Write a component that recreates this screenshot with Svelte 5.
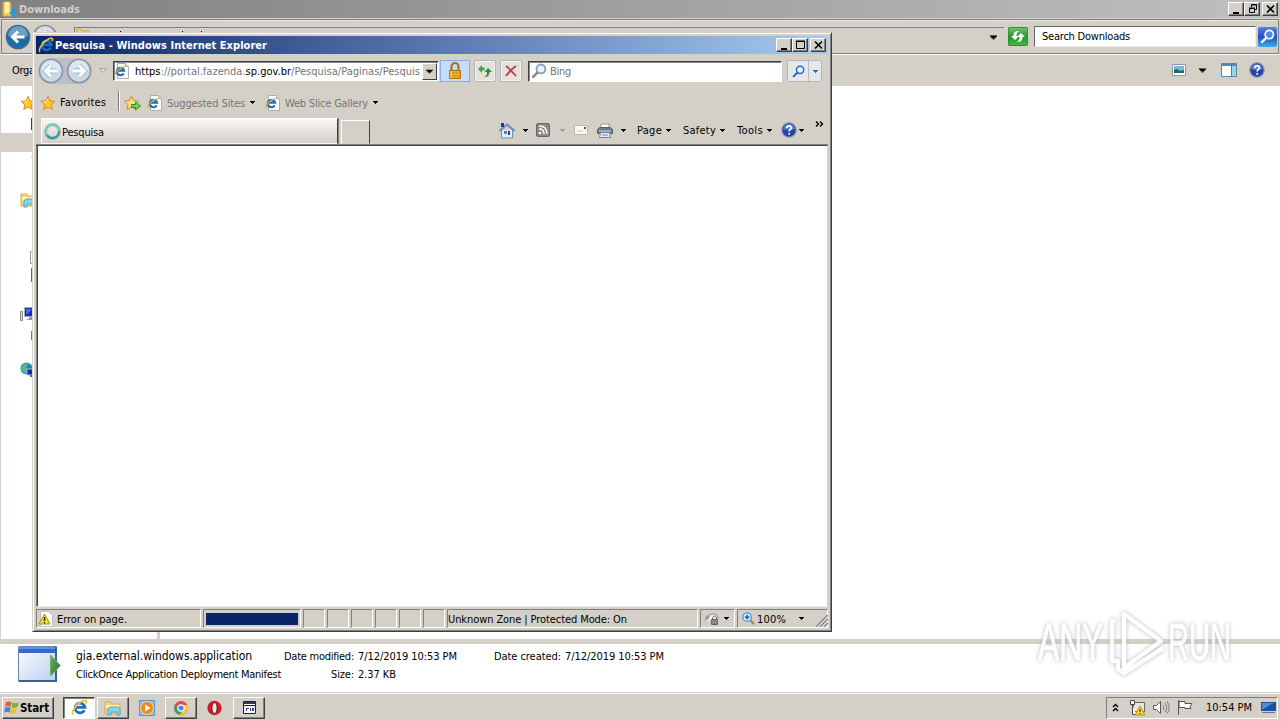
<!--
  Windows desktop: an Explorer window in the background, an Internet Explorer
  window over it and the taskbar along the bottom edge.
-->
<script lang="ts">
  const menus = [
    { name: 'Page', width: 25 },
    { name: 'Safety', width: 33 },
    { name: 'Tools', width: 26 },
  ];
  const emptyPanes = [0, 1, 2, 3, 4, 5];

  // Spreads the letters so a label takes exactly the given width.
  function fit(node: HTMLElement, width: number) {
    const chars = node.textContent?.length ?? 1;
    node.style.letterSpacing = '0';
    const natural = node.getBoundingClientRect().width;
    node.style.letterSpacing = `${(width - natural) / chars}px`;
  }
</script>

{#snippet arrow()}
  <svg class="arrow" width="5" height="3" viewBox="0 0 5 3"><path d="M0 0h5v1H4v1H3v1H2V2H1V1H0z" fill="currentColor" /></svg>
{/snippet}

{#snippet ie(size: number)}
  <svg width={size} height={size} viewBox="0 0 16 16">
    <path d="M12.6 10.6a4.600 4.600 0 1 1 .5-2.700H5" fill="none" stroke="#1a6fc4" stroke-width="2.6" />
    <path d="M4.300 6.500q1.200-2.700 4.700-2.600" fill="none" stroke="#8fdcfb" stroke-width="1.3" />
    <path d="M2 14.800C-.6 13 5.500 3.500 12.600 1.300c2.400-.5 2.200 1.300 1.300 2.900" fill="none" stroke="#f0be35" stroke-width="1.6" />
  </svg>
{/snippet}

{#snippet iePage()}
  <svg width="16" height="16" viewBox="0 0 16 16">
    <path d="M3.5.5h8l3 3v12h-11z" fill="#fff" stroke="#a7adb5" />
    <path d="M11.5.5v3h3" fill="#dce5ee" stroke="#a7adb5" />
    <path d="M9.7 10.4a3.7 3.7 0 1 1 .4-2.7H3" fill="none" stroke="#1b70bd" stroke-width="2.2" />
    <path d="M1 13C.2 10 5 4.500 11 3.6" fill="none" stroke="#dfae2c" stroke-width="1.2" />
  </svg>
{/snippet}

{#snippet star()}
  <svg width="16" height="16" viewBox="0 0 17 16">
    <path d="M8.5 1l2.1 4.7 5.2.5-3.9 3.5 1.1 5.2-4.5-2.7L4 14.9l1.1-5.2L1.2 6.2l5.2-.5z" fill="#ffc928" stroke="#d98616" />
    <path d="M8.4 3.5L7 6.8l-3.4.3" fill="none" stroke="#fff0a0" />
  </svg>
{/snippet}

{#snippet help()}
  <svg width="16" height="16" viewBox="0 0 16 16">
    <circle cx="8" cy="8" r="7.3" fill="#2446a6" stroke="#9aa0b0" stroke-width="1.2" />
    <path d="M2.4 7a5.7 5.7 0 0 1 11.2 0Q8 9 2.4 7" fill="#6286d4" />
    <path d="M5.8 6c0-3 4.7-2.8 4.6-.2C10.4 7.5 8.2 7.3 8.2 9.6M8.2 11v1.8" fill="none" stroke="#fff" stroke-width="1.7" />
  </svg>
{/snippet}

{#snippet lens(size: number, color: string, handle: string, glass: string)}
  <svg width={size} height={size} viewBox="0 0 14 14">
    <path d="M1.2 12.8L6 8" stroke={handle} stroke-width="2.2" />
    <circle cx="8.7" cy="5.2" r="3.9" fill={glass} stroke={color} stroke-width="1.6" />
  </svg>
{/snippet}

{#snippet folder()}
  <svg width="18" height="16" viewBox="0 0 18 16">
    <path d="M1 2h6l1 2h8v10H1z" fill="#f2d56b" stroke="#d3b255" />
    <path d="M2 5h13v3H2z" fill="#fff3b5" />
    <path d="M4 15V9l2-2h8l2 2v6h-3v-3H7v3z" fill="#8ad4ef" stroke="#4ba6cf" />
  </svg>
{/snippet}

{#snippet windowButtons(restore: boolean)}
  <div class="wbtns">
    <span class="wbtn"><svg width="12" height="10"><path d="M2 8h6v2H2z" /></svg></span>
    <span class="wbtn">
      {#if restore}
        <svg width="12" height="10"><path d="M4.5 3V.5h5v5H8M4 1h6M2.5 4.5h5v4h-5zM2 4h6" fill="none" stroke="#000" /></svg>
      {:else}
        <svg width="12" height="10"><path d="M1.5 1.5h8v7h-8zM1 1h9" fill="none" stroke="#000" /></svg>
      {/if}
    </span>
    <span class="wbtn close"><svg width="12" height="10"><path d="M2 1.500l7 7M9 1.500l-7 7" stroke="#000" stroke-width="1.6" /></svg></span>
  </div>
{/snippet}

{#snippet roundArrow(color: string, rim: string, flip: boolean)}
  <svg width="26" height="26" viewBox="0 0 26 26">
    <circle cx="13" cy="13" r="11.5" fill={color} stroke={rim} stroke-width="1.6" />
    <path d="M3 12a10 10 0 0 1 20 0q-10 3-20 0" fill="#fff" opacity=".35" />
    <path transform={flip ? 'translate(26 0) scale(-1 1)' : undefined} d="M19 13H8M13 7.500L7.500 13l5.500 5.500" fill="none" stroke={flip || rim === '#8795a6' ? '#a9bccb' : 'none'} stroke-width="5" />
    <path transform={flip ? 'translate(26 0) scale(-1 1)' : undefined} d="M19.500 13H8M13 7.500L7.500 13l5.500 5.500" fill="none" stroke="#fff" stroke-width="3" />
  </svg>
{/snippet}

<div class="desktop">
  <section class="explorer">
    <header class="title inactive">
      <svg width="16" height="16" viewBox="0 0 16 16">
        <path d="M1 1h7l1 2v12H1z" fill="#f0ce63" stroke="#d0a43d" />
        <path d="M3 1h4v11H3z" fill="#fff0ae" />
        <path d="M9 7h4v4h2l-4 5-4-5h2z" fill="#2998df" />
      </svg>
      <b use:fit={61}>Downloads</b>
      {@render windowButtons(true)}
    </header>

    <div class="nav">
      <div class="back">{@render roundArrow('#176eab', '#456987', false)}</div>
      <div class="forward">{@render roundArrow('#c8ced4', '#858b91', true)}</div>
      <div class="path">
        <svg width="130" height="20" viewBox="0 0 130 20">
          <path d="M2 2h4l1 2h7v14H2z" fill="#f5d66e" stroke="#cfa53e" />
          <path d="M45 4h1v2h-1zM107 4h1v2h-1zM126 4h1v2h-1z" fill="#000" />
        </svg>
        <i class="drop">{@render arrow()}</i>
      </div>
      <div class="go">
        <svg width="20" height="19" viewBox="0 0 20 19">
          <path d="M3 8l4-4 4 4H8.500c0 3 1 4 3 5-4 0-6-1-6-5z" fill="#fff" transform="matrix(1 0 0 -1 0 17)" />
          <path d="M17 10l-4-4-4 4h2.500c0 3-1 4-3 5 4 0 6-1 6-5z" fill="#fff" />
        </svg>
      </div>
      <div class="search"><span use:fit={88}>Search Downloads</span></div>
      <div class="find">{@render lens(15, '#fff', '#fff', '#4f8ae6')}</div>
    </div>

    <div class="tools">
      <span class="organize">Orga</span>
      <svg class="views" width="14" height="12" viewBox="0 0 14 12">
        <path d="M.5.5h13v11H.5z" fill="#fff" stroke="#8999a7" />
        <path d="M2 2h10v7H2z" fill="#72b7e6" /><path d="M2 6l3-1 3 2 4-1v3H2z" fill="#26685f" />
      </svg>
      <i class="viewdrop">{@render arrow()}</i>
      <svg class="preview" width="16" height="14" viewBox="0 0 16 14">
        <path d="M.5.5h15v13H.5z" fill="#fff" stroke="#5689a8" />
        <path d="M1 1h14v2H1z" fill="#5689a8" /><path d="M10 3h5v10h-5z" fill="#9fd2e5" />
        <path d="M10.500 1v12" stroke="#4a7f9b" />
      </svg>
      {@render help()}
    </div>

    <div class="files">
      <div class="tree">
        <div class="node fav">{@render star()}</div>
        <div class="node desk"><svg width="4" height="12"><path d="M1 0h3v12H1z" fill="#263c96" /></svg></div>
        <div class="node picked"></div>
        <div class="node recent"><svg width="4" height="10"><path d="M4 1Q0 5 4 9" fill="#eee" stroke="#aaa" /></svg></div>
        <div class="node libs">{@render folder()}</div>
        <div class="node doc"><svg width="3" height="13"><path d="M3 .5H.5v12H3" fill="none" stroke="#999" /></svg></div>
        <div class="node music"><svg width="3" height="14"><path d="M1 0h2v14H1z" fill="#3e7d61" /></svg></div>
        <div class="node pc">
          <svg width="18" height="16" viewBox="0 0 18 16">
            <path d="M4.500 1.500h13v9h-13z" fill="#1a29b8" stroke="#a6abc5" /><path d="M6 3h6l-4 5H6z" fill="#4966e4" />
            <path d="M9 11h5v3H7v-1h2z" fill="#999" /><path d="M.5 5.500h2v9h-2z" fill="#ddd" stroke="#888" />
          </svg>
        </div>
        <div class="node disk"><svg width="3" height="12"><path d="M1 2h2v9H1z" fill="#777" /></svg></div>
        <div class="node net">
          <svg width="18" height="16" viewBox="0 0 18 16">
            <circle cx="6.500" cy="6.500" r="6" fill="#2385b9" /><path d="M2 3q4-3 7-1L6 5l2 3-3 4-4-4z" fill="#55b88d" />
            <path d="M7 7h11v6H7z" fill="#1527a7" stroke="#b2b9d4" /><path d="M10 14h7" stroke="#666" stroke-width="2" />
          </svg>
        </div>
      </div>
      <div class="list"></div>
    </div>

    <footer class="details">
      <svg class="app" width="44" height="37" viewBox="0 0 44 37">
        <defs>
          <linearGradient id="pane" x2="1" y2="1"><stop stop-color="#fff" /><stop offset="1" stop-color="#b9ccef" /></linearGradient>
          <linearGradient id="play" x2="1" y2="1"><stop stop-color="#67b35c" /><stop offset="1" stop-color="#23752a" /></linearGradient>
        </defs>
        <path d="M.5.5h38v35H.5z" fill="url(#pane)" stroke="#6a86a9" />
        <path d="M1 1h37v6H1z" fill="#326bd0" /><path d="M1 1h37v2H1z" fill="#6292e6" /><path d="M38 1v34H1" fill="none" stroke="#3b628e" stroke-width="2" />
        <path d="M32.500 9v21l10-10.500z" fill="url(#play)" stroke="#71af68" />
      </svg>
      <div class="info">
        <div class="line">
          <span class="fname" use:fit={176}>gia.external.windows.application</span>
          <span class="mod" use:fit={70}>Date modified:</span><span class="modval" use:fit={99}>7/12/2019 10:53 PM</span>
          <span class="created" use:fit={67}>Date created:</span><span class="createdval" use:fit={99}>7/12/2019 10:53 PM</span>
        </div>
        <div class="line">
          <span class="kind" use:fit={205}>ClickOnce Application Deployment Manifest</span>
          <span class="size" use:fit={23}>Size:</span><span class="sizeval" use:fit={38}>2.37 KB</span>
        </div>
      </div>
    </footer>
  </section>

  <section class="browser">
    <header class="title active">
      {@render ie(16)}
      <b use:fit={212}>Pesquisa - Windows Internet Explorer</b>
      {@render windowButtons(false)}
    </header>

    <div class="address">
      <div class="travel">
        {@render roundArrow('#c9dae7', '#8795a6', false)}
        {@render roundArrow('#c9dae7', '#8795a6', true)}
      </div>
      <svg class="history" width="8" height="6"><path d="M.5.500h7L4 4.500z" fill="#e4e1dc" stroke="#aaa69f" /></svg>
      <div class="url">
        {@render iePage()}
        <span use:fit={285}>https<em>://portal.fazenda.</em>sp.gov.br<em>/Pesquisa/Paginas/Pesquis</em></span>
        <i class="combo">{@render arrow()}</i>
      </div>
      <div class="lock">
        <svg width="14" height="18" viewBox="0 0 14 18">
          <path d="M3.500 9V4.500a3.500 3.500 0 0 1 7 0V9" fill="none" stroke="#9c7a25" stroke-width="2.200" />
          <path d="M1.500 8.500h11v8h-11z" fill="#eeb51f" stroke="#a96f0d" />
          <path d="M2 11h10M2 14h10" stroke="#c98611" /><path d="M3 9v7" stroke="#ffe16e" />
        </svg>
      </div>
      <div class="sq">
        <svg width="14" height="14" viewBox="0 0 14 14">
          <path d="M0 5l4-4v2.500h2.500v3H4V9z" fill="#40a543" /><path d="M14 8l-4-4-3.500 4H9v2.500L6.500 13q5 0 5-5z" fill="#278d32" />
        </svg>
      </div>
      <div class="sq stop">
        <svg width="12" height="12" viewBox="0 0 12 12"><path d="M1 1q4 3 10 10M11 1Q6 4 1 11" fill="none" stroke="#c23b45" stroke-width="1.900" /></svg>
      </div>
      <div class="bing">{@render lens(16, '#849eb5', '#85878a', '#e4f3ff')}<span use:fit={21}>Bing</span></div>
      <div class="bingbtn"><span>{@render lens(13, '#2765ca', '#2765ca', '#e4f3ff')}</span><i>{@render arrow()}</i></div>
    </div>

    <div class="favorites">
      {@render star()}
      <span class="favlabel" use:fit={46}>Favorites</span>
      <i class="rule"></i>
      <svg class="addfav" width="18" height="16" viewBox="0 0 18 16">
        <path d="M7.500 1l2 4.500 5 .5-3.500 3.500 1 5-4.500-2.600L3 14.500l1-5L.7 6l4.800-.5z" fill="#ffe282" stroke="#d98b1b" />
        <path d="M7.500 9.500h4V7l5 4-5 4v-2.500h-4z" fill="#71d64d" stroke="#269226" />
      </svg>
      <span class="suggest">{@render iePage()}</span><span class="dim" use:fit={78}>Suggested Sites</span>{@render arrow()}
      <span class="slices">{@render iePage()}</span><span class="dim" use:fit={83}>Web Slice Gallery</span>{@render arrow()}
    </div>

    <div class="tabs">
      <div class="tab">
        <svg width="17" height="17" viewBox="0 0 17 17">
          <circle cx="8.500" cy="8.500" r="6.600" fill="none" stroke="#88cfc5" stroke-width="2.800" />
          <path d="M3 12a6.600 6.600 0 0 0 12-4" fill="none" stroke="#2d9a99" stroke-width="2" />
          <circle cx="8.500" cy="8.500" r="7.800" fill="none" stroke="#64919a" stroke-width=".6" />
        </svg>
        <span use:fit={42}>Pesquisa</span>
      </div>
      <div class="newtab"></div>
      <div class="commands">
        <svg width="16" height="17" viewBox="0 0 16 17">
          <path d="M2.500 8v8h11V8" fill="#e0eefb" stroke="#6f8ea8" /><path d="M.5 9L8 2.500 15.500 9" fill="none" stroke="#6f8db6" stroke-width="2" />
          <path d="M2 1h3v4H2z" fill="#2433a9" /><path d="M5 9h3v3H5z" fill="#4d83bb" /><path d="M9 9h2v4H9z" fill="#234392" />
        </svg>
        <i class="d1">{@render arrow()}</i>
        <svg class="rss" width="14" height="14" viewBox="0 0 14 14">
          <rect x=".5" y=".5" width="13" height="13" rx="1.500" fill="#898989" stroke="#686868" />
          <path d="M3 6q5 0 5 5M3 3q8 0 8 8" fill="none" stroke="#fff" stroke-width="1.500" /><circle cx="4" cy="10" r="1.300" fill="#fff" />
        </svg>
        <i class="d2">{@render arrow()}</i>
        <svg class="mail" width="14" height="10" viewBox="0 0 14 10"><path d="M.5.500h13v9H.5z" fill="#faf9f7" stroke="#b9b8b6" /><path d="M10 2h2v2h-2z" fill="#c62323" /><path d="M3 6h6" stroke="#c8c8c8" /></svg>
        <svg class="printer" width="16" height="15" viewBox="0 0 16 15">
          <path d="M4 1h8v5H4z" fill="#fff" stroke="#8b9199" /><path d="M.5 6.500l2-2h11l2 2v4H.5z" fill="#737b85" stroke="#55606a" />
          <path d="M2 8h12" stroke="#d7dfe6" /><path d="M3.500 9.500h9l1 5h-11z" fill="#e6edf4" stroke="#728495" /><path d="M5 12h6" stroke="#648abb" />
        </svg>
        <i class="d3">{@render arrow()}</i>
        {#each menus as menu}
          <span class="menu"><span use:fit={menu.width}>{menu.name}</span>{@render arrow()}</span>
        {/each}
        <span class="helpmenu">{@render help()}{@render arrow()}</span>
        <svg class="more" width="9" height="7"><path d="M1 .5L3.500 3 1 5.500M5 .5L7.500 3 5 5.500" fill="none" stroke="#000" stroke-width="1.400" /></svg>
      </div>
    </div>

    <main class="page"></main>

    <footer class="status">
      <div class="cell error">
        <svg width="15" height="16" viewBox="0 0 15 16">
          <path d="M2.500.500h8l4 4v11h-12z" fill="#fff" stroke="#c0c0c0" />
          <path d="M6.500 3L12 13H1z" fill="#ffda27" stroke="#a78a20" /><path d="M6.500 6v4M6.500 11v1.300" stroke="#222" stroke-width="1.400" />
        </svg>
        <span use:fit={70}>Error on page.</span>
      </div>
      <div class="cell progress"><i></i></div>
      {#each emptyPanes as pane (pane)}<div class="cell empty"></div>{/each}
      <div class="cell zone"><span use:fit={179}>Unknown Zone | Protected Mode: On</span></div>
      <div class="cell privacy">
        <svg width="16" height="16" viewBox="0 0 16 16">
          <path d="M1 10q2-7 8-7 5 0 5 5" fill="#eee" stroke="#aaa" stroke-width="1.500" /><path d="M1 7l3-3 2 2-3 3z" fill="#999" />
          <path d="M7.500 8.500h6v5h-6z" fill="#888" stroke="#666" /><path d="M8.500 8V6.500q2-3 4 0V8" fill="none" stroke="#666" />
        </svg>
        {@render arrow()}
      </div>
      <div class="cell zoom">
        <svg width="13" height="13" viewBox="0 0 14 14"><path d="M8 8l5 5" stroke="#b78a51" stroke-width="2.500" /><circle cx="5.500" cy="5.500" r="4.600" fill="#d9efff" stroke="#5295d0" stroke-width="1.400" /><path d="M3 5.500h5M5.500 3v5" stroke="#1767b4" stroke-width="1.700" /></svg>
        <span use:fit={29}>100%</span>
        {@render arrow()}
        <svg class="grip" width="12" height="12"><path d="M0 12L12 0M4 12l8-8M8 12l4-4" stroke="#808080" stroke-width="1.500" /><path d="M1.500 12L12 1.500M5.500 12L12 5.500M9.500 12L12 9.500" stroke="#fff" stroke-width=".7" /></svg>
      </div>
    </footer>
  </section>

  <div class="watermark">
    <span class="any">ANY</span>
    <svg width="60" height="70" viewBox="74 0 60 70">
      <path d="M90 7l37 27-37 27zM82 14h-4v40h6v8l6 4 39-25" fill="none" stroke="#fff" stroke-width="4.500" stroke-linejoin="round" />
    </svg>
    <span class="run">RUN</span>
  </div>

  <nav class="taskbar">
    <div class="task start">
      <svg width="16" height="16" viewBox="0 0 17 16">
        <path d="M2 2q3-2 6 0L7 7Q4 5 1 7z" fill="#e9602b" /><path d="M9 2q3 2 7 0l-2 5q-3 2-6 0z" fill="#72b73a" />
        <path d="M1 8q3-2 6 0l-1 5q-3-2-6 0z" fill="#3b8bd6" /><path d="M8 8q3 2 6 0l-2 5q-3 2-6 0z" fill="#f3bd2c" />
      </svg>
      <b use:fit={29}>Start</b>
    </div>
    <div class="task on">{@render ie(17)}</div>
    <div class="task">{@render folder()}</div>
    <div class="pin">
      <svg width="16" height="16"><path d="M.5.500h15v15H.5z" fill="#8bc2ec" stroke="#5096ce" /><circle cx="8" cy="8" r="6.500" fill="#f18b20" stroke="#ffd597" /><path d="M6 4.500v7L11.500 8z" fill="#fff" /></svg>
    </div>
    <div class="task">
      <svg width="16" height="16" viewBox="0 0 16 16"><circle cx="8" cy="8" r="7" fill="#e04a3f" /><path d="M2 4.500a7 7 0 0 0 5 10.400L10.500 9 5 9z" fill="#36a852" /><path d="M8 5h6.300A7 7 0 0 1 7 14.900L10.500 9z" fill="#f9c83b" /><circle cx="8" cy="8" r="3.200" fill="#4688f1" stroke="#fff" stroke-width="1.200" /></svg>
    </div>
    <div class="pin opera">
      <svg width="15" height="16" viewBox="0 0 15 16"><circle cx="7.500" cy="8" r="7.200" fill="#c91f2c" /><ellipse cx="7.500" cy="8" rx="2.600" ry="5.500" fill="#f2e7e5" stroke="#8e101b" /></svg>
    </div>
    <div class="task">
      <svg width="13" height="13"><path d="M.5.500h12v12H.5z" fill="#fff" stroke="#222" /><path d="M1 2h11" stroke="#2b3c68" stroke-width="2" /><path d="M1 4.500h11" stroke="#222" /><path d="M3 7h3v1H4v2H3zM7 7h1v3H7zM9 7h2v3H9z" fill="#274995" /></svg>
    </div>
    <div class="tray">
      <svg width="7" height="10"><path d="M1 4l2.500-2.500L6 4M1 8l2.500-2.500L6 8" fill="none" stroke="#000" stroke-width="1.400" /></svg>
      <svg class="lan" width="16" height="16"><path d="M4.500 2.500h11v9h-11z" fill="#e6e4df" stroke="#666" /><path d="M1.500.500h4v4h-4zM3.500 4.500v10h4" fill="#fff" stroke="#444" /><path d="M11 6l5 9H6z" fill="#ffd629" stroke="#b8921a" /><path d="M11 9v3M11 13v1" stroke="#222" /></svg>
      <svg class="sound" width="17" height="15"><path d="M.5 5.500h3l4-4v12l-4-4h-3z" fill="#fff" stroke="#555" /><path d="M10 5q2 2.500 0 5M12 3q3.500 4.500 0 9M14 1.500q4.500 6 0 12" fill="none" stroke="#777" /></svg>
      <svg class="flag" width="16" height="15"><path d="M1.500 0v15M2 1.500h6v2h7l-2 3 1 2H8v-1H2z" fill="#fff" stroke="#555" /></svg>
      <span use:fit={46}>10:54 PM</span>
      <svg class="show" width="15" height="13"><path d="M0 1h15v9H0z" fill="#1c50a6" /><path d="M1 2h13q-5 1-13 7z" fill="#4e8bdd" /><path d="M1 11h13v1H1z" fill="#627791" /></svg>
    </div>
  </nav>
</div>

<style>
  :global(body) {
    margin: 0;
    overflow: hidden;
  }
  .desktop {
    position: relative;
    width: 1280px;
    height: 720px;
    overflow: hidden;
    display: flex;
    flex-direction: column;
    background: #d4d0c8;
    color: #000;
    font: 11px/14px 'DejaVu Sans Condensed', 'DejaVu Sans', sans-serif;
    font-stretch: condensed;
    letter-spacing: -0.3px;
    white-space: nowrap;
  }
  .desktop * {
    box-sizing: border-box;
  }
  svg {
    display: block;
    flex: none;
  }
  span,
  b,
  i {
    flex: none;
  }
  em,
  i {
    font-style: normal;
  }

  /* caption bars */
  .title {
    display: flex;
    align-items: center;
    height: 18px;
    flex: none;
    padding-left: 2px;
  }
  .title b {
    margin-left: 1px;
    padding-top: 1px;
  }
  .inactive {
    background: linear-gradient(90deg, #808080, #c0c0c0);
    color: #d4d0c8;
    padding-right: 2px;
  }
  .active {
    background: linear-gradient(90deg, #0a246a, #a6caf0);
    color: #fff;
    padding-right: 2px;
  }
  .wbtns {
    display: flex;
    margin-left: auto;
  }
  .wbtn {
    width: 16px;
    height: 14px;
    padding: 1px 0 0 2px;
    background: #d4d0c8;
    border: 1px solid;
    border-color: #fff #404040 #404040 #fff;
    box-shadow: inset -1px -1px #808080;
  }
  .close {
    margin-left: 2px;
  }

  /* explorer */
  .explorer {
    display: flex;
    flex-direction: column;
    height: 692px;
    flex: none;
  }
  .nav {
    display: flex;
    align-items: center;
    height: 35px;
    margin: 1px 1px 0;
    border: 1px solid #808080;
    box-shadow: 0 1px #fff, inset 0 1px #e9e6e0;
    flex: none;
  }
  .back {
    margin: 1px 0 0 3px;
  }
  .forward {
    margin: 1px 0 0 1px;
  }
  .path {
    display: flex;
    align-items: center;
    width: 930px;
    height: 20px;
    margin-left: 16px;
    border-top: 1px solid #808080;
    border-left: 1px solid #808080;
  }
  .drop {
    margin-left: auto;
    margin-right: 8px;
    transform: scale(1.5);
  }
  .go {
    width: 20px;
    height: 19px;
    margin-left: 4px;
    background: linear-gradient(#77cb77, #219529 50%, #45bd47);
    border-radius: 2px;
    box-shadow: inset 0 0 0 1px #388a3c;
  }
  .search {
    width: 222px;
    height: 21px;
    margin-left: 6px;
    padding: 3px 0 0 7px;
    background: #fff;
    border: 1px solid;
    border-color: #666 #eee #eee #666;
  }
  .search span {
    display: inline-block;
  }
  .find {
    display: grid;
    place-items: center;
    width: 19px;
    height: 20px;
    margin-left: 2px;
    background: linear-gradient(#5485e6, #2251c5 50%, #36b0eb);
    border-radius: 2px;
  }
  .tools {
    display: flex;
    align-items: center;
    height: 32px;
    padding: 0 15px 0 12px;
    flex: none;
  }
  .organize {
    padding-top: 1px;
  }
  .views {
    margin-left: auto;
  }
  .viewdrop {
    margin-left: 14px;
    transform: scale(1.5);
  }
  .preview {
    margin: 0 12px 0 16px;
  }
  .files {
    display: flex;
    height: 553px;
    background: #fff;
    border-left: 1px solid #d4d0c8;
    flex: none;
  }
  .tree {
    width: 159px;
    border-right: 3px solid #d4d0c8;
  }
  .fav {
    padding: 9px 0 0 19px;
  }
  .desk,
  .recent,
  .doc,
  .music,
  .disk {
    padding-left: 29px;
  }
  .desk {
    padding-top: 7px;
  }
  .picked {
    height: 19px;
    margin-top: 3px;
    background: #d4d0c8;
  }
  .recent {
    height: 40px;
  }
  .libs {
    height: 59px;
    padding-left: 19px;
  }
  .doc {
    height: 17px;
  }
  .music {
    height: 38px;
  }
  .pc {
    height: 23px;
    padding-left: 19px;
  }
  .disk {
    height: 33px;
  }
  .net {
    padding-left: 19px;
  }
  .details {
    display: flex;
    height: 53px;
    border-top: 5px solid #d4d0c8;
    background: #fff;
    padding: 2px 0 0 18px;
    flex: none;
  }
  .info {
    margin: 4px 0 0 14px;
  }
  .line {
    display: flex;
    height: 18px;
  }
  .fname {
    font-size: 12px;
    margin-top: -1px;
  }
  .mod {
    margin-left: 32px;
  }
  .modval,
  .createdval {
    margin-left: 4px;
  }
  .created {
    margin-left: 37px;
  }
  .size {
    margin-left: 50px;
  }
  .sizeval {
    margin-left: 4px;
  }

  /* browser */
  .browser {
    position: absolute;
    left: 32px;
    top: 32px;
    width: 800px;
    height: 600px;
    padding: 3px;
    display: flex;
    flex-direction: column;
    background: #d4d0c8;
    border: 1px solid;
    border-color: #d4d0c8 #404040 #404040 #d4d0c8;
    box-shadow: inset 1px 1px #fff, inset -1px -1px #808080;
  }
  .address {
    display: flex;
    align-items: center;
    height: 34px;
    flex: none;
  }
  .travel {
    display: flex;
    gap: 2px;
    margin-left: 2px;
    border-radius: 14px;
    background: #bdbfc2;
  }
  .history {
    margin-left: 7px;
  }
  .url {
    display: flex;
    align-items: center;
    width: 326px;
    height: 20px;
    margin-left: 6px;
    background: #fff;
    border: 1px solid;
    border-color: #404040 #fff #fff #404040;
    box-shadow: inset 1px 1px #888;
    flex: none;
  }
  .url span {
    margin-left: 5px;
    padding-top: 2px;
  }
  em,
  .dim,
  .bing {
    color: #757575;
  }
  .combo {
    display: grid;
    place-items: center;
    width: 15px;
    height: 17px;
    margin-left: auto;
    margin-right: 1px;
    background: #d4d0c8;
    border: 1px solid;
    border-color: #fff #404040 #404040 #fff;
  }
  .combo .arrow {
    transform: scale(1.4);
  }
  .lock {
    display: grid;
    place-items: center;
    width: 30px;
    height: 22px;
    margin-left: 1px;
    background: #c8dcf7;
    border: 1px solid #89afe2;
  }
  .sq {
    display: grid;
    place-items: center;
    width: 22px;
    height: 22px;
    margin-left: 4px;
    background: #e4e2de;
    border: 1px solid #b2b5b9;
    border-radius: 2px;
    box-shadow: inset 0 0 0 1px #f5f4f2;
  }
  .bing {
    display: flex;
    align-items: center;
    width: 254px;
    height: 21px;
    margin-left: 6px;
    padding-left: 2px;
    background: #fff;
    border: 1px solid;
    border-color: #404040 #fff #fff #404040;
    box-shadow: inset 1px 1px #888;
  }
  .bing span {
    margin-left: 3px;
    padding-top: 2px;
  }
  .bingbtn {
    display: flex;
    width: 35px;
    height: 22px;
    margin-left: 5px;
    background: #e6e7e8;
    border: 1px solid #b3b7bd;
    border-radius: 2px;
    color: #2863bd;
  }
  .bingbtn span,
  .bingbtn i {
    display: grid;
    place-items: center;
    width: 20px;
  }
  .bingbtn i {
    width: 13px;
    border-left: 1px solid #b8bcc2;
  }
  .favorites {
    display: flex;
    align-items: center;
    height: 29px;
    padding-left: 4px;
    flex: none;
  }
  .favlabel {
    margin-left: 4px;
  }
  .rule {
    width: 2px;
    height: 20px;
    margin: -3px 4px 0 12px;
    border-left: 1px solid #808080;
    border-right: 1px solid #fff;
  }
  .suggest {
    margin-left: 5px;
  }
  .dim {
    margin: 0 5px 0 4px;
    padding-top: 2px;
  }
  .slices {
    margin-left: 10px;
  }
  .tabs {
    display: flex;
    height: 28px;
    flex: none;
    border-bottom: 1px solid #808080;
  }
  .tab {
    display: flex;
    align-items: center;
    width: 297px;
    height: 26px;
    margin: 1px 0 0 5px;
    padding: 1px 0 0 2px;
    background: linear-gradient(#f8f7f5, #d4d0c8);
    border: 1px solid;
    border-color: #fff #404040 transparent #fff;
    box-shadow: 1px 0 #808080;
    flex: none;
  }
  .tab span {
    margin-left: 1px;
    padding-top: 2px;
  }
  .newtab {
    width: 29px;
    height: 24px;
    margin: 3px 0 0 3px;
    border: 1px solid;
    border-color: #fff #404040 transparent #fff;
    flex: none;
  }
  .commands {
    display: flex;
    align-items: center;
    height: 26px;
    margin-left: 129px;
    flex: none;
  }
  .d1 {
    margin: 0 8px;
  }
  .d2 {
    margin: 0 9px 0 10px;
    color: #999;
  }
  .mail {
    margin-right: 9px;
  }
  .d3 {
    margin: 0 11px 0 8px;
  }
  .menu {
    display: flex;
    align-items: center;
    gap: 4px;
    margin-right: 12px;
  }
  .menu span {
    padding-top: 1px;
  }
  .helpmenu {
    display: flex;
    align-items: center;
    gap: 2px;
    margin-left: -3px;
  }
  .more {
    margin: -12px 0 0 11px;
  }
  .page {
    height: 462px;
    flex: none;
    background: #fff;
    border: 1px solid;
    border-color: #404040 #d4d0c8 #eee #808080;
    box-shadow: inset 1px 0 #404040;
  }
  .status {
    display: flex;
    gap: 2px;
    height: 21px;
    padding-top: 2px;
    flex: none;
  }
  .cell {
    display: flex;
    align-items: center;
    height: 19px;
    border: 1px solid;
    border-color: #808080 #fff #fff #808080;
    flex: none;
  }
  .cell span {
    padding-top: 2px;
  }
  .error {
    width: 165px;
    padding-left: 1px;
  }
  .error span {
    margin-left: 4px;
  }
  .progress {
    width: 98px;
    padding-left: 2px;
  }
  .progress i {
    width: 92px;
    height: 12px;
    background: #0a246a;
  }
  .empty {
    width: 22px;
  }
  .zone {
    width: 251px;
  }
  .privacy {
    width: 35px;
    padding-left: 3px;
    gap: 4px;
  }
  .zoom {
    width: 91px;
    padding-left: 4px;
    gap: 2px;
  }
  .zoom .arrow {
    margin-left: 11px;
  }
  .grip {
    margin: 5px -1px 0 auto;
  }

  .watermark {
    position: absolute;
    left: 1038px;
    top: 607px;
    display: flex;
    align-items: center;
    width: 200px;
    height: 70px;
    color: #fff;
    font: 52px/60px 'Liberation Sans', Arial, sans-serif;
    letter-spacing: 0;
    opacity: 0.85;
    filter: drop-shadow(0 0 2px #aaa);
    -webkit-text-stroke: 1px #fff;
  }
  .any {
    width: 70px;
    transform: scaleX(0.61);
    transform-origin: 0 50%;
  }
  .run {
    width: 64px;
    transform: scaleX(0.56);
    transform-origin: 0 50%;
  }

  /* taskbar */
  .taskbar {
    display: flex;
    align-items: center;
    height: 28px;
    padding: 2px 2px 0;
    border-top: 1px solid #d4d0c8;
    box-shadow: inset 0 1px #fff;
    flex: none;
  }
  .task {
    display: grid;
    place-items: center;
    width: 32px;
    height: 22px;
    margin-left: 2px;
    border: 1px solid;
    border-color: #fff #404040 #404040 #fff;
    box-shadow: inset -1px -1px #808080;
  }
  .start {
    display: flex;
    width: 52px;
    margin: 0 7px 0 0;
    padding-left: 1px;
    font-size: 11.5px;
  }
  .on {
    background: #fff;
    border-color: #404040 #fff #fff #404040;
    box-shadow: inset 1px 1px #808080;
  }
  .pin {
    margin: 0 8px 0 10px;
  }
  .opera {
    margin-right: 9px;
  }
  .tray {
    display: flex;
    align-items: center;
    width: 172px;
    height: 22px;
    margin-left: auto;
    padding-left: 5px;
    border: 1px solid;
    border-color: #808080 #fff #fff #808080;
  }
  .lan {
    margin-left: 10px;
  }
  .sound {
    margin-left: 8px;
  }
  .flag {
    margin: 0 13px 0 7px;
  }
  .show {
    margin-left: 9px;
  }
</style>
